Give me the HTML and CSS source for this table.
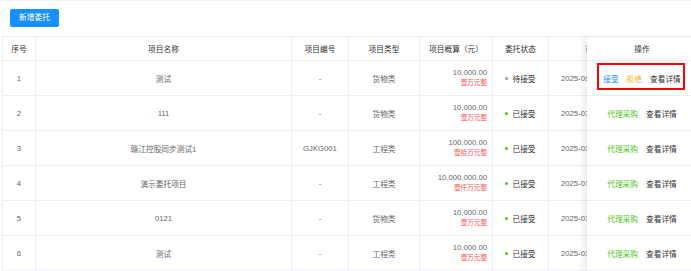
FILE: index.html
```html
<!DOCTYPE html>
<html lang="zh-CN">
<head>
<meta charset="utf-8">
<title>委托列表</title>
<link rel="stylesheet" href="styles.css">
</head>
<body>
<div class="page">
  <div class="toolbar">
    <button class="btn-primary">新增委托</button>
  </div>
  <div class="table-wrap">
    <div class="grid">
      <div class="row head">
        <div class="cell">序号</div>
        <div class="cell">项目名称</div>
        <div class="cell">项目编号</div>
        <div class="cell">项目类型</div>
        <div class="cell">项目概算（元）</div>
        <div class="cell">委托状态</div>
        <div class="cell clip"><span class="clip-inner center">委托时间</span></div>
      </div>
      <div class="row">
        <div class="cell">1</div>
        <div class="cell">测试</div>
        <div class="cell">-</div>
        <div class="cell">货物类</div>
        <div class="cell money"><span class="num">10,000.00</span><span class="cn">壹万元整</span></div>
        <div class="cell"><span class="status"><i class="dot grey"></i>待接受</span></div>
        <div class="cell clip"><span class="clip-inner date">2025-09-10 10:20:35</span></div>
      </div>
      <div class="row">
        <div class="cell">2</div>
        <div class="cell">111</div>
        <div class="cell">-</div>
        <div class="cell">货物类</div>
        <div class="cell money"><span class="num">10,000.00</span><span class="cn">壹万元整</span></div>
        <div class="cell"><span class="status"><i class="dot green"></i>已接受</span></div>
        <div class="cell clip"><span class="clip-inner date">2025-03-12 09:15:20</span></div>
      </div>
      <div class="row">
        <div class="cell">3</div>
        <div class="cell">赣江控股同步测试1</div>
        <div class="cell">GJKG001</div>
        <div class="cell">工程类</div>
        <div class="cell money"><span class="num">100,000.00</span><span class="cn">壹拾万元整</span></div>
        <div class="cell"><span class="status"><i class="dot green"></i>已接受</span></div>
        <div class="cell clip"><span class="clip-inner date">2025-03-05 14:02:11</span></div>
      </div>
      <div class="row">
        <div class="cell">4</div>
        <div class="cell">演示委托项目</div>
        <div class="cell">-</div>
        <div class="cell">工程类</div>
        <div class="cell money"><span class="num">10,000,000.00</span><span class="cn">壹仟万元整</span></div>
        <div class="cell"><span class="status"><i class="dot green"></i>已接受</span></div>
        <div class="cell clip"><span class="clip-inner date">2025-01-21 16:40:08</span></div>
      </div>
      <div class="row">
        <div class="cell">5</div>
        <div class="cell">0121</div>
        <div class="cell">-</div>
        <div class="cell">货物类</div>
        <div class="cell money"><span class="num">10,000.00</span><span class="cn">壹万元整</span></div>
        <div class="cell"><span class="status"><i class="dot green"></i>已接受</span></div>
        <div class="cell clip"><span class="clip-inner date">2025-01-21 11:30:45</span></div>
      </div>
      <div class="row">
        <div class="cell">6</div>
        <div class="cell">测试</div>
        <div class="cell">-</div>
        <div class="cell">工程类</div>
        <div class="cell money"><span class="num">10,000.00</span><span class="cn">壹万元整</span></div>
        <div class="cell"><span class="status"><i class="dot green"></i>已接受</span></div>
        <div class="cell clip"><span class="clip-inner date">2025-01-15 10:05:12</span></div>
      </div>
    </div>

    <div class="fixed-col">
      <div class="frow head"><span>操作</span></div>
      <div class="frow ops">
        <a class="link blue">接受</a><a class="link orange">拒绝</a><a class="link dark">查看详情</a>
        <div class="highlight"></div>
      </div>
      <div class="frow ops"><a class="link green">代理采购</a><a class="link dark">查看详情</a></div>
      <div class="frow ops"><a class="link green">代理采购</a><a class="link dark">查看详情</a></div>
      <div class="frow ops"><a class="link green">代理采购</a><a class="link dark">查看详情</a></div>
      <div class="frow ops"><a class="link green">代理采购</a><a class="link dark">查看详情</a></div>
      <div class="frow ops"><a class="link green">代理采购</a><a class="link dark">查看详情</a></div>
    </div>
  </div>
</div>
</body>
</html>
```

FILE: styles.css
```css
* { box-sizing: border-box; }

html, body {
  margin: 0;
  padding: 0;
  background: #fff;
  overflow: hidden;
}

body {
  font-family: "Liberation Sans", "Noto Sans CJK SC", sans-serif;
  font-size: 7.7px;
  color: #666;
}

.page {
  width: 691px;
  height: 271px;
  overflow: hidden;
  border-top: 1px solid #f3f3f3;
}

.toolbar {
  height: 35px;
  padding: 8px 0 0 10px;
}

.btn-primary {
  display: block;
  width: 49px;
  height: 18px;
  padding: 0;
  border: none;
  border-radius: 2px;
  background: #1890ff;
  color: #fff;
  font-family: inherit;
  font-size: 7.7px;
  line-height: 18px;
}

.table-wrap {
  display: flex;
  align-items: flex-start;
  margin-left: 2px;
  width: 800px;
  border-top: 1px solid #ebeef5;
}

.grid {
  flex: none;
  display: flex;
  flex-direction: column;
  border-left: 1px solid #ebeef5;
}

.row {
  display: grid;
  grid-template-columns: 33px 256px 57px 71px 73px 56px 38px;
  height: 35px;
  border-bottom: 1px solid #ebeef5;
}

.row.head {
  height: 24px;
  color: #333;
}

.cell {
  display: flex;
  align-items: center;
  justify-content: center;
  border-right: 1px solid #ebeef5;
  white-space: nowrap;
  overflow: hidden;
}

.cell.clip {
  justify-content: flex-start;
  border-right: none;
}

.clip-inner {
  flex: none;
  width: 104px;
  white-space: nowrap;
}

.clip-inner.center { text-align: center; }

.clip-inner.date {
  padding-left: 12px;
  color: #666;
}

.cell.money {
  flex-direction: column;
  align-items: flex-end;
  justify-content: center;
  padding-right: 5px;
  line-height: 10px;
}

.num { color: #666; }

.cn {
  color: #ff4d4f;
  font-size: 6.6px;
  line-height: 10px;
}

.status {
  display: flex;
  align-items: center;
  gap: 4px;
  color: #333;
}

.dot {
  display: block;
  width: 3px;
  height: 3px;
  border-radius: 50%;
}

.dot.grey { background: #999; }
.dot.green { background: #52c41a; }

.fixed-col {
  flex: none;
  position: relative;
  z-index: 1;
  width: 110px;
  background: #fff;
  box-shadow: -4px 0 6px rgba(0, 0, 0, 0.07);
}

.frow {
  position: relative;
  display: flex;
  align-items: center;
  justify-content: center;
  gap: 8px;
  height: 35px;
  border-bottom: 1px solid #ebeef5;
}

.frow.head {
  height: 24px;
  color: #333;
}

.link {
  cursor: pointer;
  white-space: nowrap;
}

.link.blue { color: #1890ff; }
.link.orange { color: #faad14; }
.link.green { color: #52c41a; }
.link.dark { color: #333; }

.highlight {
  position: absolute;
  left: 10px;
  top: 2px;
  width: 88px;
  height: 27px;
  border: 2px solid #ff0000;
}
```
